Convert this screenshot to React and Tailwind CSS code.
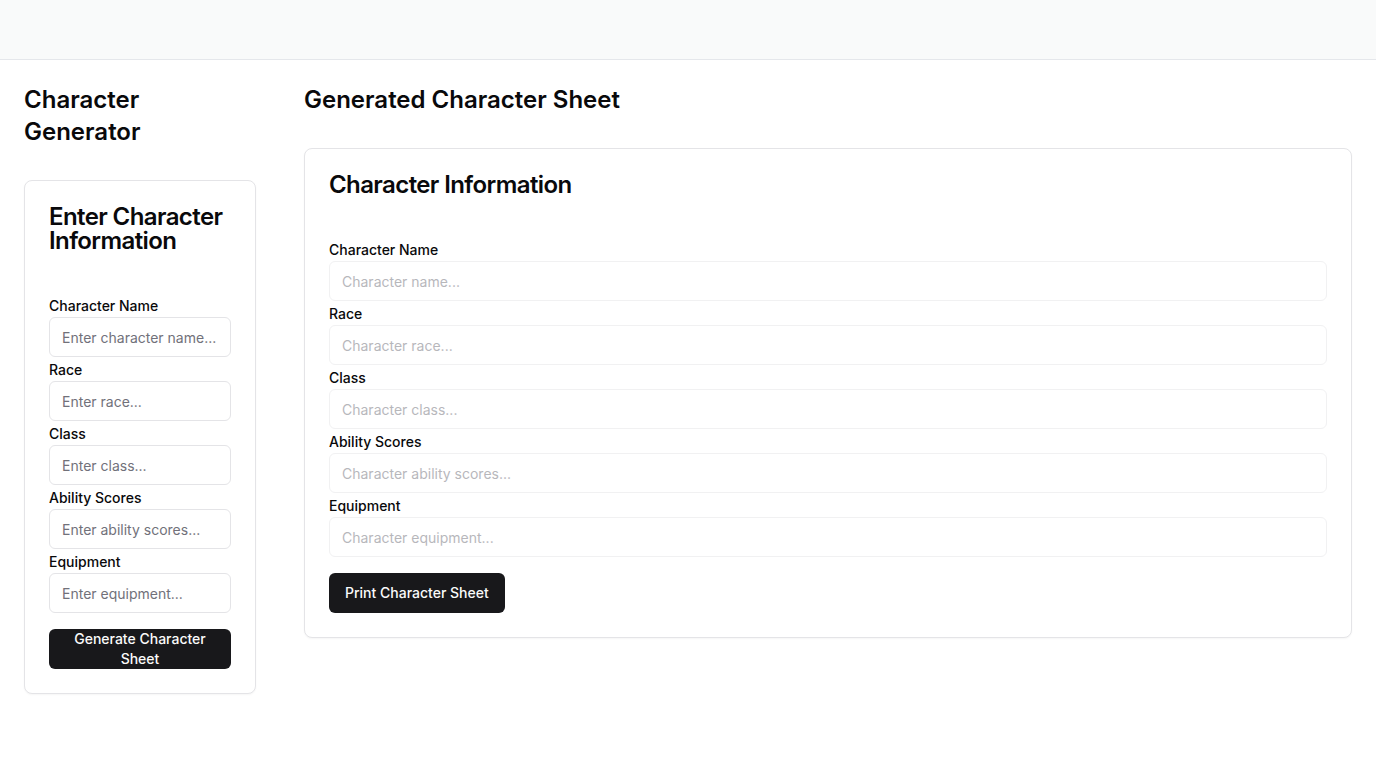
import React from 'react';

const font = { fontFamily: 'Inter, "Noto Sans", sans-serif' };

const Field = ({ label, placeholder, disabled }) => (
  <div className="flex flex-col">
    <label className="text-sm font-medium leading-5 text-[#09090b] h-[21px]">{label}</label>
    <input
      disabled={disabled}
      placeholder={placeholder}
      className="h-10 w-full rounded-md border border-[#e4e4e7] bg-white px-3 text-sm text-[#09090b] placeholder:text-[#71717a] disabled:opacity-50 outline-none"
    />
  </div>
);

const leftFields = [
  ['Character Name', 'Enter character name...'],
  ['Race', 'Enter race...'],
  ['Class', 'Enter class...'],
  ['Ability Scores', 'Enter ability scores...'],
  ['Equipment', 'Enter equipment...'],
];

const rightFields = [
  ['Character Name', 'Character name...'],
  ['Race', 'Character race...'],
  ['Class', 'Character class...'],
  ['Ability Scores', 'Character ability scores...'],
  ['Equipment', 'Character equipment...'],
];

export default function App() {
  return (
    <div className="min-h-screen bg-white text-[#09090b]" style={font}>
      {/* top bar */}
      <header className="h-[60px] bg-[#f9fafa] border-b border-[#e5e7eb]" />

      <main className="flex gap-12 px-6 pt-6">
        {/* left column */}
        <aside className="w-[232px] shrink-0">
          <h1 className="text-2xl font-semibold leading-8">Character Generator</h1>
          <div className="mt-8 rounded-lg border border-[#e4e4e7] bg-white shadow-[0_1px_2px_rgba(0,0,0,0.04)]">
            <div className="p-6 pb-0">
              <h2 className="text-2xl font-semibold leading-none tracking-tight">Enter Character Information</h2>
            </div>
            <div className="px-6 pt-[43px] pb-[23px]">
              <div className="flex flex-col gap-[3px]">
                {leftFields.map(([l, p]) => (
                  <Field key={l} label={l} placeholder={p} />
                ))}
              </div>
              <button className="mt-4 h-10 w-full rounded-md bg-[#18181b] px-4 text-sm font-medium leading-5 text-[#fafafa]">
                Generate Character Sheet
              </button>
            </div>
          </div>
        </aside>

        {/* right column */}
        <section className="flex-1">
          <h1 className="text-2xl font-semibold leading-8">Generated Character Sheet</h1>
          <div className="mt-8 rounded-lg border border-[#e4e4e7] bg-white shadow-[0_1px_2px_rgba(0,0,0,0.04)]">
            <div className="p-6 pb-0">
              <h2 className="text-2xl font-semibold leading-none tracking-tight">Character Information</h2>
            </div>
            <div className="p-6 pt-[43px]">
              <div className="flex flex-col gap-[3px]">
                {rightFields.map(([l, p]) => (
                  <Field key={l} label={l} placeholder={p} disabled />
                ))}
              </div>
              <button className="mt-4 h-10 rounded-md bg-[#18181b] px-4 text-sm font-medium text-[#fafafa]">
                Print Character Sheet
              </button>
            </div>
          </div>
        </section>
      </main>
    </div>
  );
}
